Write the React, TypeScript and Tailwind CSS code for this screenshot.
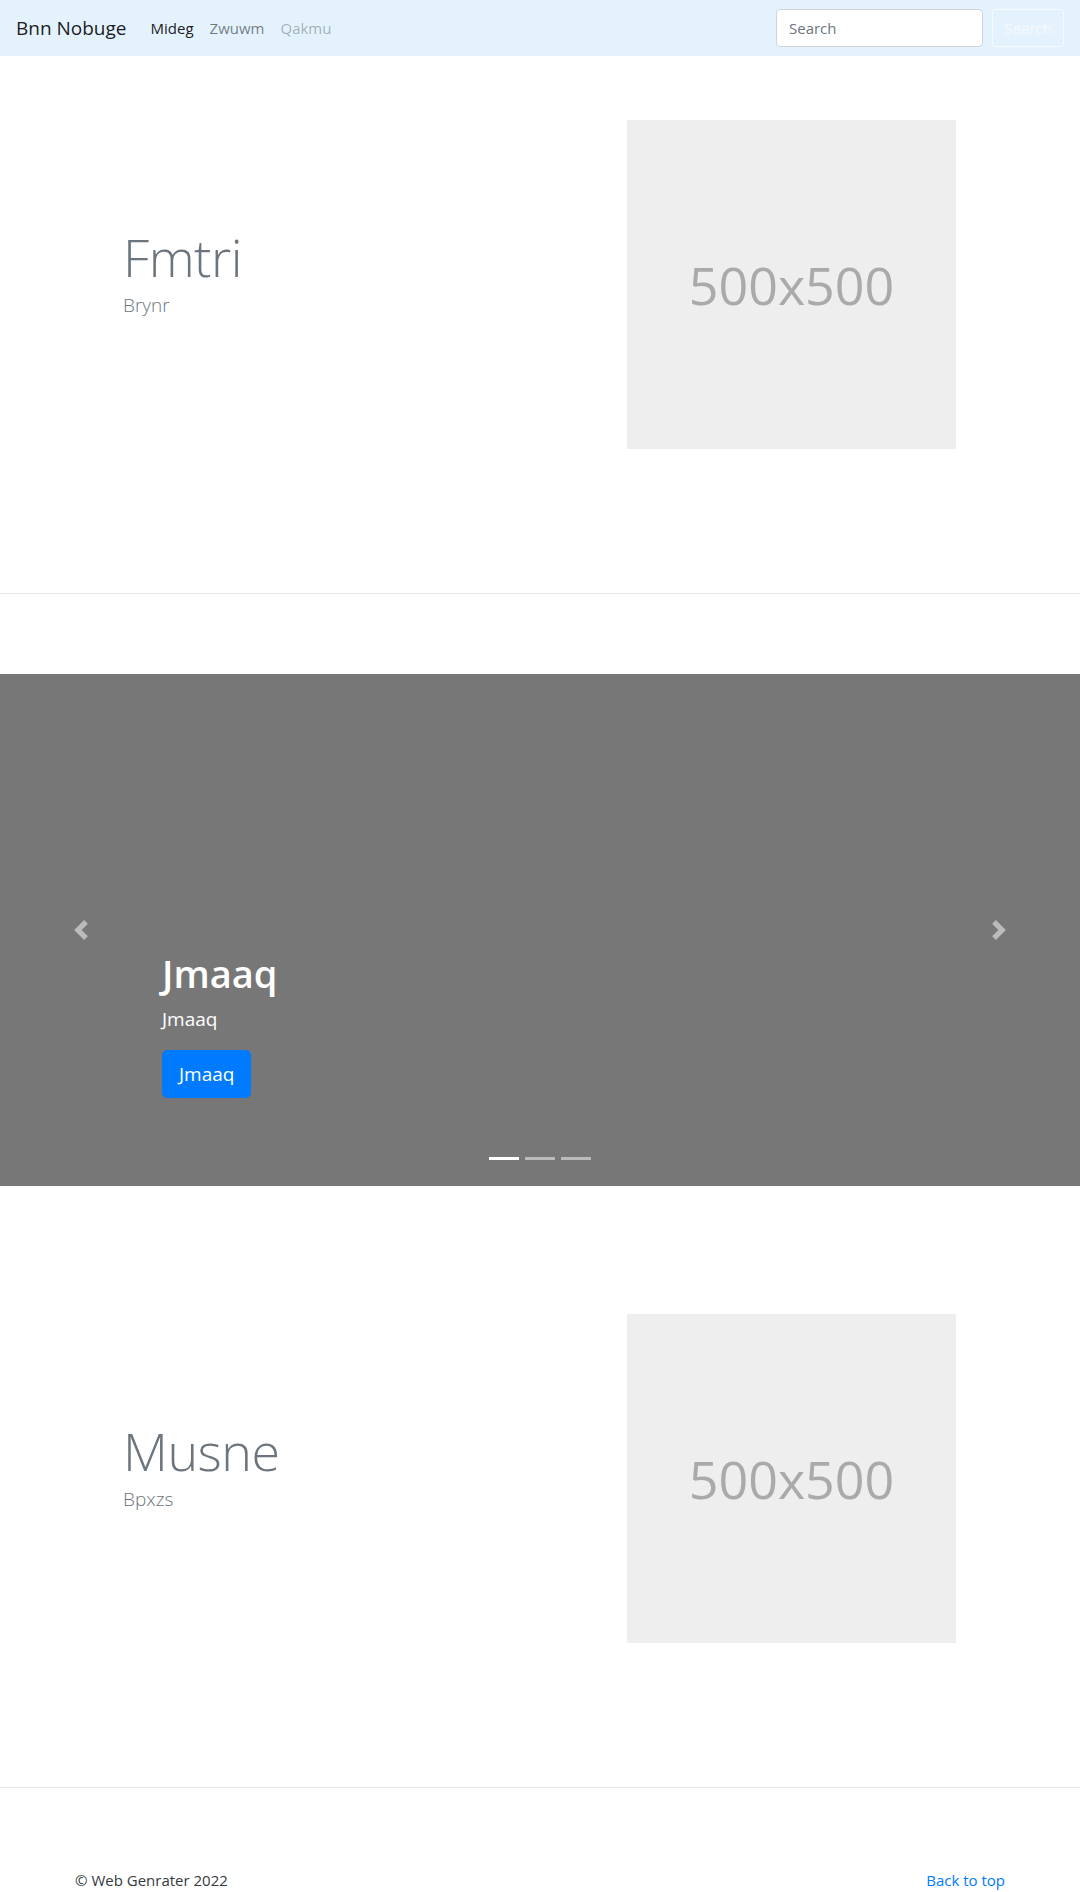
const Featurette = ({ title, lead }: { title: string; lead: string }) => {
  return (
    <section className="max-w-[960px] mx-auto px-[15px] py-16 flex items-center">
      <div className="flex-1 pl-12 pb-6">
        <h2 className="text-[52px] font-light leading-[1.2] tracking-[-0.5px] text-[#6c757d] mb-[3px]">{title}</h2>
        <p className="text-[19px] font-light leading-[1.5] text-[#6c757d]">{lead}</p>
      </div>
      <div className="w-[329px] h-[329px] mr-[49px] bg-[#eeeeee] flex items-center justify-center">
        <span className="text-[52px] text-[#aaaaaa]">500x500</span>
      </div>
    </section>
  );
};

const Carousel = () => {
  return (
    <div className="relative h-[512px] bg-[#777777] mb-16">
      <button className="absolute left-0 top-0 bottom-0 w-[15%] flex items-center justify-center">
        <svg width="20" height="20" viewBox="0 0 8 8" fill="#fff" className="opacity-50">
          <path d="M5.25 0l-4 4 4 4 1.5-1.5L4.25 4l2.5-2.5L5.25 0z" />
        </svg>
      </button>
      <button className="absolute right-0 top-0 bottom-0 w-[15%] flex items-center justify-center">
        <svg width="20" height="20" viewBox="0 0 8 8" fill="#fff" className="opacity-50">
          <path d="M2.75 0l-1.5 1.5L3.75 4l-2.5 2.5L2.75 8l4-4-4-4z" />
        </svg>
      </button>
      <div className="absolute left-[15%] right-[15%] bottom-[88px] text-white">
        <h1 className="text-[38px] font-semibold leading-[1.2] mb-2">Jmaaq</h1>
        <p className="text-[19px] font-medium leading-[1.5] mb-4">Jmaaq</p>
        <a className="inline-block bg-[#007bff] text-white text-[19px] leading-[1.5] px-4 py-[9px] border border-[#007bff] rounded-[5px]">
          Jmaaq
        </a>
      </div>
      <ul className="absolute left-0 right-0 bottom-[26px] flex justify-center gap-[6px]">
        <li className="w-[30px] h-[3px] bg-white" />
        <li className="w-[30px] h-[3px] bg-white/50" />
        <li className="w-[30px] h-[3px] bg-white/50" />
      </ul>
    </div>
  );
};

const App = () => {
  return (
    <div className="font-['Open_Sans','Noto_Sans',sans-serif] text-[#212529] bg-white min-h-[1892px]">
      <nav className="h-14 bg-[#e3f2fd] flex items-center px-4">
        <a className="text-[19px] leading-[1.5] text-black/90 mr-4">Bnn Nobuge</a>
        <ul className="flex text-[15px]">
          <li><a className="px-2 py-2 text-black/90">Mideg</a></li>
          <li><a className="px-2 py-2 text-black/50">Zwuwm</a></li>
          <li><a className="px-2 py-2 text-black/30">Qakmu</a></li>
        </ul>
        <form className="ml-auto flex">
          <input
            placeholder="Search"
            className="w-[207px] h-[38px] px-3 bg-white border border-[#ced4da] rounded text-[15px] placeholder:text-[#6c757d]"
          />
          <button type="button" className="ml-[9px] w-[72px] h-[38px] border border-[#f8f9fa] text-[#f8f9fa] rounded text-[15px]">
            Search
          </button>
        </form>
      </nav>

      <Featurette title="Fmtri" lead="Brynr" />
      <hr className="mt-20 mb-20 border-0 border-t border-black/10" />
      <Carousel />
      <Featurette title="Musne" lead="Bpxzs" />
      <hr className="mt-20 mb-0 border-0 border-t border-black/10" />

      <footer className="max-w-[960px] mx-auto px-[15px] pt-20 flex justify-between text-[15px] leading-[24px]">
        <p className="text-[#343a40]">© Web Genrater 2022</p>
        <a className="text-[#007bff]">Back to top</a>
      </footer>
    </div>
  );
};

export default App;
